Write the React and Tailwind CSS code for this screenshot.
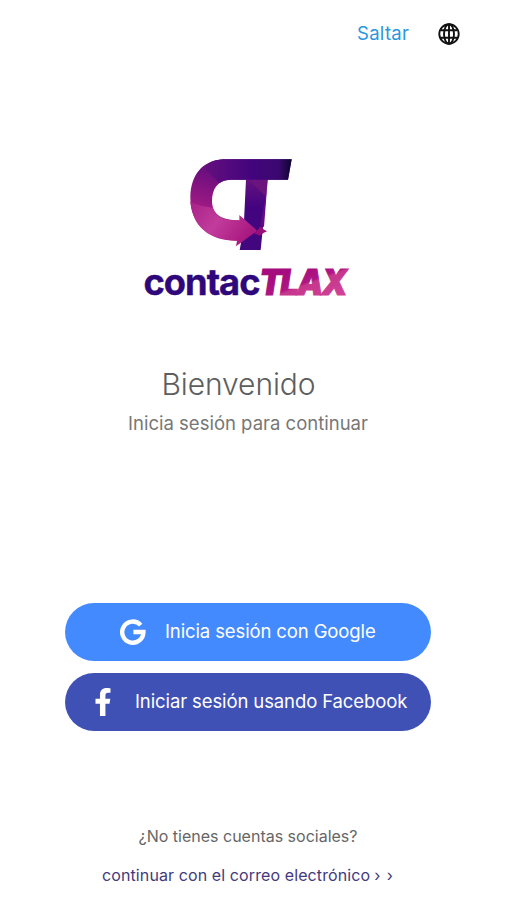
import React from 'react';
import { FaFacebookF } from 'react-icons/fa';

const LogoMark = () => (
  <svg width="125" height="115" viewBox="0 0 375 345" aria-hidden="true">
    <defs>
      <linearGradient id="bowl" x1="0.7" y1="0" x2="0.35" y2="1">
        <stop offset="0" stopColor="#4b087e" />
        <stop offset="0.35" stopColor="#73107f" />
        <stop offset="0.7" stopColor="#9e1a83" />
        <stop offset="1" stopColor="#b52b8c" />
      </linearGradient>
      <linearGradient id="bar" x1="0" y1="0" x2="1" y2="0">
        <stop offset="0" stopColor="#65107e" />
        <stop offset="0.55" stopColor="#43047d" />
        <stop offset="0.85" stopColor="#3a0870" />
        <stop offset="1" stopColor="#0d0530" />
      </linearGradient>
      <linearGradient id="stem" x1="0" y1="0" x2="0" y2="1">
        <stop offset="0" stopColor="#65127f" />
        <stop offset="0.4" stopColor="#430380" />
        <stop offset="1" stopColor="#42077e" />
      </linearGradient>
      <linearGradient id="arrow" x1="0" y1="0" x2="1" y2="0.5">
        <stop offset="0" stopColor="#a9218a" />
        <stop offset="0.5" stopColor="#c13c9b" />
        <stop offset="1" stopColor="#a91880" />
      </linearGradient>
    </defs>
    <path d="M198 103H263L242 315H179L191 250Z" fill="url(#stem)" />
    <path d="M204 103H263L257 154Z" fill="#6c147d" />
    <path d="M263 105L252 246L241 240L257 153Z" fill="#650b82" />
    <path d="M130 43H335L324 104H150C112 106 96 132 96 169C97 205 119 226 178 226V287C85 287 30 238 31 155C33 91 65 47 130 43Z" fill="url(#bowl)" />
    <path d="M130 43H335L324 104H150C137 105 126 108 118 114L70 68C87 51 107 44 130 43Z" fill="url(#bar)" />
    <path d="M31 171C55 181 78 187 98 188C106 215 130 227 178 226V210L232 257L168 304L171 287C91 288 39 248 31 171Z" fill="url(#arrow)" />
    <path d="M232 257L241 244L250 253L261 259L250 264L240 272L222 265Z" fill="#980f79" />
  </svg>
);

const Wordmark = () => (
  <svg width="226" height="56" viewBox="0 0 226 56" role="img" aria-label="contacTLAX">
    <defs>
      <linearGradient id="tlax" gradientUnits="userSpaceOnUse" x1="158" y1="14" x2="172" y2="52">
        <stop offset="0" stopColor="#a40b7d" />
        <stop offset="0.42" stopColor="#b01682" />
        <stop offset="0.48" stopColor="#c5368c" />
        <stop offset="1" stopColor="#d04296" />
      </linearGradient>
    </defs>
    <text x="8.5" y="40.3" textLength="116" lengthAdjust="spacingAndGlyphs" fill="#2e087a" stroke="#2e087a" strokeWidth="0.4" className="font-['Inter',sans-serif] text-[36px] font-bold tracking-[-1px]">
      contac
    </text>
    <text x="124.5" y="40.3" textLength="86" lengthAdjust="spacingAndGlyphs" fill="url(#tlax)" stroke="url(#tlax)" strokeWidth="1.2" className="font-['Inter',sans-serif] text-[36px] font-black italic tracking-[-2px]">
      TLAX
    </text>
  </svg>
);

const GlobeIcon = () => (
  <svg width="22" height="22" viewBox="0 0 22 22" fill="none" stroke="#111" strokeWidth="1.9" aria-hidden="true">
    <circle cx="11" cy="11" r="9.7" />
    <ellipse cx="11" cy="11" rx="5" ry="9.7" />
    <path d="M2.3 7.3H19.7M2.3 14.7H19.7M11 1.3V20.7" />
  </svg>
);

const GoogleIcon = () => (
  <svg width="26" height="26" viewBox="0 0 26 26" fill="none" stroke="#fff" strokeWidth="4.4" aria-hidden="true">
    <path d="M20.7 6.1A10.6 10.6 0 1 0 23.4 13H13.4" />
  </svg>
);

export default function App() {
  return (
    <div className="h-[900px] w-[506px] overflow-hidden bg-white pl-[65px] font-['Inter',sans-serif]">
      <div className="flex w-[366px] flex-col items-center">
        {/* Top bar */}
        <header className="-mr-[59px] flex h-[67px] items-center gap-7 self-end">
          <button className="w-[53px] whitespace-nowrap text-left text-[18.5px] tracking-[0.3px] text-[#2c95df]">Saltar</button>
          <div className="mr-[30px]">
            <GlobeIcon />
          </div>
        </header>

        {/* Logo */}
        <div className="mt-[78px] flex flex-col items-center">
          <div className="mr-[12px] h-[110px]">
            <LogoMark />
          </div>
          <Wordmark />
        </div>

        {/* Greeting */}
        <h1 className="mt-[53px] mr-[19px] h-[40px] whitespace-nowrap text-[30px] leading-[40px] font-light tracking-[-0.1px] text-[#5e5e5e]">
          Bienvenido
        </h1>
        <p className="mt-[6px] h-[26px] whitespace-nowrap text-[18.5px] leading-[26px] text-[#777]">
          Inicia sesión para continuar
        </p>

        {/* Social sign in */}
        <div className="mt-[167px] flex w-full flex-col gap-3 text-white">
          <button className="flex h-[58px] items-center rounded-full bg-[#448aff] pl-[55px]">
            <GoogleIcon />
            <span className="ml-[19px] whitespace-nowrap text-[18.5px] tracking-[-0.12px]">Inicia sesión con Google</span>
          </button>
          <button className="flex h-[58px] items-center rounded-full bg-[#3f51b5] pl-[25px]">
            <FaFacebookF className="h-[28px] w-[26px]" />
            <span className="ml-[19px] whitespace-nowrap text-[18.5px] tracking-[-0.11px]">Iniciar sesión usando Facebook</span>
          </button>
        </div>

        {/* Email fallback */}
        <p className="mt-[93px] h-[24px] whitespace-nowrap text-[16px] leading-[24px] text-[#666]">¿No tienes cuentas sociales?</p>
        <a className="mt-[15px] flex h-[24px] gap-1 whitespace-nowrap text-[16px] leading-[24px] text-[#433a7c]">
          <span className="tracking-[0.1px]">continuar con el correo electrónico</span>
          <span className="tracking-[1px]">› ›</span>
        </a>
      </div>
    </div>
  );
}
